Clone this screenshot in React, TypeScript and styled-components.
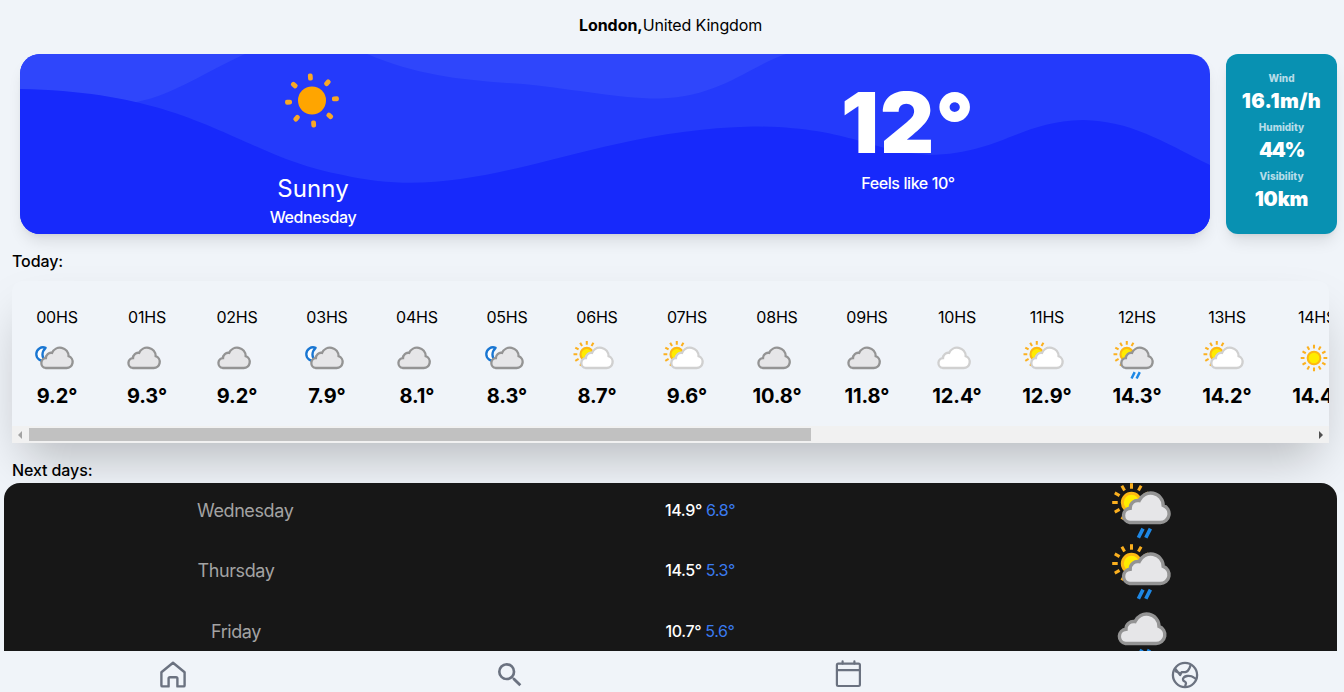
import React from "react";
import styled, { createGlobalStyle } from "styled-components";
import { MdSearch } from "react-icons/md";

const GlobalStyle = createGlobalStyle`
  *, *::before, *::after { box-sizing: border-box; }
  html, body { margin: 0; padding: 0; height: 692px; overflow: hidden; background: #f0f4f9; }
  body { font-family: Inter, Roboto, sans-serif; font-size: 16px; color: #000; }
`;

const Page = styled.div`
  display: flex;
  flex-direction: column;
  width: 1344px;
  height: 692px;
  overflow: hidden;
`;

/* ---------- header ---------- */

const Location = styled.header`
  display: flex;
  justify-content: center;
  align-items: center;
  flex: 0 0 54px;
  padding: 0 3px 5px 0;
  line-height: 24px;
`;

const City = styled.strong`
  font-weight: 700;
  letter-spacing: -0.05px;
`;

const Country = styled.span`
  letter-spacing: -0.15px;
`;

/* ---------- current weather ---------- */

const CurrentRow = styled.section`
  display: flex;
  gap: 16px;
  flex: 0 0 180px;
  padding: 0 7px 0 20px;
`;

const CurrentCard = styled.div`
  display: grid;
  grid-template: 100% / 1fr 1fr;
  flex: 0 0 1190px;
  border-radius: 20px;
  overflow: hidden;
  color: #fff;
  background: #243afb;
  box-shadow: 0 10px 15px -3px rgba(0, 0, 0, 0.1), 0 4px 6px -4px rgba(0, 0, 0, 0.1);
`;

const Waves = styled.svg`
  grid-area: 1 / 1 / 2 / 3;
  width: 1190px;
  height: 180px;
`;

const CurrentCell = styled.div<{ $column: number; $top: number }>`
  grid-area: 1 / ${(p) => p.$column};
  z-index: 1;
  display: flex;
  flex-direction: column;
  align-items: center;
  padding: ${(p) => p.$top}px 9px 0 0;
`;

const Condition = styled.div`
  margin-top: 43px;
  font-size: 24px;
  line-height: 32px;
  letter-spacing: 0.1px;
`;

const SmallLine = styled.div`
  font-weight: 500;
  line-height: 24px;
  letter-spacing: -0.4px;
`;

const BigTemp = styled.div`
  font-size: 84px;
  font-weight: 900;
  line-height: 96px;
  letter-spacing: 1px;
`;

const DetailCard = styled.aside`
  display: flex;
  flex-direction: column;
  align-items: center;
  flex: 1;
  padding-top: 16px;
  border-radius: 12px;
  background: #0891b2;
  box-shadow: 0 10px 15px -3px rgba(0, 0, 0, 0.1), 0 4px 6px -4px rgba(0, 0, 0, 0.1);
`;

const DetailLabel = styled.div`
  font-size: 10px;
  font-weight: 800;
  line-height: 17px;
  color: #b5dce8;
`;

const DetailValue = styled.div<{ $track: number }>`
  font-size: 20px;
  font-weight: 900;
  line-height: 28px;
  margin-bottom: 4px;
  color: #fff;
  letter-spacing: ${(p) => p.$track}px;
`;

/* ---------- hourly ---------- */

const SectionTitle = styled.h2<{ $height: number; $lift: number }>`
  display: flex;
  align-items: flex-end;
  flex: 0 0 ${(p) => p.$height}px;
  margin: 0;
  padding: 0 0 ${(p) => p.$lift}px 12px;
  font-size: 16px;
  line-height: 20px;
  font-weight: 500;
  letter-spacing: -0.1px;
`;

const HourlyCard = styled.section`
  display: flex;
  flex-direction: column;
  flex: 0 0 162px;
  width: 1317px;
  margin-left: 12px;
  overflow: hidden;
  border-radius: 10px 10px 0 0;
  background: #f0f4f9;
  box-shadow: 0 25px 50px -12px rgba(0, 0, 0, 0.25);
`;

const HourList = styled.div`
  display: flex;
  flex: 0 0 145px;
  overflow: hidden;
`;

const HourItem = styled.div`
  display: flex;
  flex-direction: column;
  align-items: center;
  flex: 0 0 90px;
  padding-top: 24px;
`;

const HourLabel = styled.div`
  line-height: 24px;
  letter-spacing: -0.2px;
`;

const HourTemp = styled.div`
  font-size: 20px;
  font-weight: 700;
  line-height: 28px;
  letter-spacing: -0.1px;
`;

const HourIcon = styled.div`
  display: flex;
  height: 44px;
  margin: 7px 6px 2px 0;
`;

const ScrollTrack = styled.div`
  display: flex;
  align-items: center;
  flex: 0 0 17px;
  padding: 0 6px;
  background: #f1f1f1;
`;

const ScrollThumb = styled.div`
  width: 782px;
  height: 13px;
  margin: 0 auto 0 7px;
  background: #c1c1c1;
`;

const ScrollArrow = styled.div<{ $dir: "left" | "right" }>`
  border: 4px solid transparent;
  border-left-width: ${(p) => (p.$dir === "left" ? 0 : 4)}px;
  border-right-width: ${(p) => (p.$dir === "left" ? 4 : 0)}px;
  border-${(p) => (p.$dir === "left" ? "right" : "left")}-color: ${(p) =>
    p.$dir === "left" ? "#a3a3a3" : "#505050"};
`;

/* ---------- next days ---------- */

const DaysCard = styled.section`
  flex: 0 0 168px;
  width: 1333px;
  margin-left: 4px;
  overflow: hidden;
  border-radius: 16px 16px 0 0;
  background: #171717;
`;

const DayRow = styled.div`
  display: grid;
  grid-template-columns: 78px 80px 64px;
  column-gap: 385px;
  align-items: center;
  height: 60.5px;
  padding: 0 0 7px 193px;
`;

const DayName = styled.div`
  display: flex;
  justify-content: safe center;
  padding-top: 1px;
  font-size: 18px;
  color: #a3a3a3;
  letter-spacing: -0.4px;
`;

const DayTemps = styled.div`
  display: flex;
  justify-content: center;
  gap: 4px;
  color: #fff;
  font-weight: 500;
  letter-spacing: -0.35px;
`;

const LowTemp = styled.span`
  color: #3b7bf0;
  font-weight: 400;
`;

const DayIcon = styled.div`
  display: flex;
  align-self: start;
  height: 53px;
  margin: -7px 0 0 -15px;
`;

/* ---------- navigation ---------- */

const Nav = styled.nav`
  display: grid;
  grid-template-columns: repeat(4, 337.5px);
  flex: 0 0 41px;
  margin-left: 4px;
`;

const NavItem = styled.a`
  display: flex;
  justify-content: center;
  height: 40px;
  padding-top: 8px;
  color: #6b7280;
`;

/* ---------- icons ---------- */

const WeatherSvg = styled.svg`
  overflow: visible;
  flex: none;
`;

type Kind = "night" | "overcast" | "cloudy" | "partly" | "sunRain" | "rain" | "sun";

const CLOUD =
  "M19.7 46.5H50.2A8.8 8.8 0 0 0 53.2 29.4A12.5 12.5 0 0 0 29.2 24.6A7.5 7.5 0 0 0 20.2 32.2A7.2 7.2 0 0 0 19.7 46.5Z";

function SunShape({ cx, cy }: { cx: number; cy: number }) {
  return (
    <g transform={`translate(${cx} ${cy})`}>
      {Array.from({ length: 12 }, (_, i) => (
        <path key={i} d="M0-19.3V-13.8" stroke="#fbb01f" strokeWidth="3" transform={`rotate(${i * 30})`} />
      ))}
      <circle r="9.2" fill="#ffec00" stroke="#fdb813" strokeWidth="3" />
    </g>
  );
}

function WeatherIcon({ kind, size }: { kind: Kind; size: number }) {
  const behind = kind === "partly" || kind === "sunRain" || kind === "night";
  const white = kind === "partly" || kind === "cloudy";
  const rain = kind === "sunRain" || kind === "rain";
  return (
    <WeatherSvg width={size} height={size} viewBox="0 0 64 64" fill="none">
      {kind === "sun" && <SunShape cx={32} cy={32} />}
      {(kind === "partly" || kind === "sunRain") && <SunShape cx={21.5} cy={26.5} />}
      {kind === "night" && (
        <path
          d="M19.8 17.2A9.8 9.8 0 1 0 19.3 35.5C13.8 31 13.8 23 19.8 17.2Z"
          fill="#fff"
          stroke="#1976d2"
          strokeWidth="3.4"
          strokeLinejoin="round"
        />
      )}
      {kind !== "sun" && (
        <path
          d={CLOUD}
          transform={behind ? undefined : "translate(-4.2 0)"}
          fill={white ? "#fff" : "#e6e6e8"}
          stroke={white ? "#d0d0d0" : "#949494"}
          strokeWidth="3.4"
        />
      )}
      {rain && (
        <path
          d="M33 52.6L28.4 61.8M40.4 52.6L35.8 61.8"
          transform={behind ? undefined : "translate(-1 0)"}
          stroke="#1e88e5"
          strokeWidth="3.6"
        />
      )}
    </WeatherSvg>
  );
}

function BigSun() {
  return (
    <WeatherSvg width="62" height="60" viewBox="-30 -30.5 62 60">
      {Array.from({ length: 8 }, (_, i) => (
        <rect
          key={i}
          x="-2.4"
          y="-27"
          width="4.8"
          height="7"
          rx="2"
          fill="#f9a825"
          transform={`rotate(${i * 45 - 4})`}
        />
      ))}
      <circle r="14" fill="#ffa500" />
    </WeatherSvg>
  );
}

function HomeIcon() {
  return (
    <svg width="32" height="32" viewBox="0 0 32 32" fill="none" stroke="currentColor" strokeWidth="2.4" strokeLinejoin="round">
      <path d="M4.4 13.2L16 3.8L27.6 13.2V26.4A1 1 0 0 1 26.6 27.4H20.4V19.6A1.4 1.4 0 0 0 19 18.2H13A1.4 1.4 0 0 0 11.6 19.6V27.4H5.4A1 1 0 0 1 4.4 26.4Z" />
    </svg>
  );
}

function CalendarIcon() {
  return (
    <svg width="32" height="32" viewBox="0 0 32 32" fill="none" stroke="currentColor" strokeWidth="2.2" strokeLinecap="round">
      <rect x="4.9" y="4.6" width="23" height="22.4" rx="1.4" />
      <path d="M5 11.2H28M10.6 2.4V4.6M22.4 2.4V4.6" />
    </svg>
  );
}

function GlobeIcon() {
  return (
    <svg width="32" height="32" viewBox="0 0 32 32" fill="none" stroke="currentColor" strokeWidth="2.3" strokeLinejoin="round">
      <circle cx="16" cy="16" r="12.1" />
      <path d="M21.8 5.8L20.4 9.2C19.4 11.4 18.6 12.8 16.6 13L12.6 13.2L11.2 16L6 9.6M5.8 12L11.2 14.2" />
      <path d="M27.6 20.4L24.6 18.4C23 17 20.4 16.8 18 17C15.4 17.4 13.6 19 14 20.8C14.4 22.8 17 22.4 17 24.2L16 28" />
    </svg>
  );
}

/* ---------- data ---------- */

const hours: [string, Kind, string][] = [
  ["00HS", "night", "9.2°"],
  ["01HS", "overcast", "9.3°"],
  ["02HS", "overcast", "9.2°"],
  ["03HS", "night", "7.9°"],
  ["04HS", "overcast", "8.1°"],
  ["05HS", "night", "8.3°"],
  ["06HS", "partly", "8.7°"],
  ["07HS", "partly", "9.6°"],
  ["08HS", "overcast", "10.8°"],
  ["09HS", "overcast", "11.8°"],
  ["10HS", "cloudy", "12.4°"],
  ["11HS", "partly", "12.9°"],
  ["12HS", "sunRain", "14.3°"],
  ["13HS", "partly", "14.2°"],
  ["14HS", "sun", "14.4°"],
];

const days: [string, string, string, Kind][] = [
  ["Wednesday", "14.9°", "6.8°", "sunRain"],
  ["Thursday", "14.5°", "5.3°", "sunRain"],
  ["Friday", "10.7°", "5.6°", "rain"],
];

const details: [string, string, number][] = [
  ["Wind", "16.1m/h", 0.4],
  ["Humidity", "44%", -1.4],
  ["Visibility", "10km", -0.2],
];

export default function App() {
  return (
    <Page>
      <GlobalStyle />
      <Location>
        <City>London,</City>
        <Country>United Kingdom</Country>
      </Location>

      <CurrentRow>
        <CurrentCard>
          <Waves viewBox="0 0 1190 180">
            <path d="M0 0H225C185 18 155 40 117 48L0 60Z" fill="#2f46fb" />
            <path d="M347 0C400 22 440 26 503 30C540 33 600 45 640 44.5C700 43 730 12 766 0Z" fill="#2f46fb" />
            <path
              d="M0 35C180 38 220 103 323 121C460 153 560 76 733 72.5C830 73 850 98 909 101C980 100 1000 67 1063 66C1110 67 1140 86 1190 111V180H0Z"
              fill="#1729fb"
            />
          </Waves>
          <CurrentCell $column={1} $top={16}>
            <BigSun />
            <Condition>Sunny</Condition>
            <SmallLine>Wednesday</SmallLine>
          </CurrentCell>
          <CurrentCell $column={2} $top={21}>
            <BigTemp>12°</BigTemp>
            <SmallLine>Feels like 10°</SmallLine>
          </CurrentCell>
        </CurrentCard>
        <DetailCard>
          {details.map(([label, value, track]) => (
            <React.Fragment key={label}>
              <DetailLabel>{label}</DetailLabel>
              <DetailValue $track={track}>{value}</DetailValue>
            </React.Fragment>
          ))}
        </DetailCard>
      </CurrentRow>

      <SectionTitle $height={47} $lift={10}>Today:</SectionTitle>
      <HourlyCard>
        <HourList>
          {hours.map(([label, kind, temp]) => (
            <HourItem key={label}>
              <HourLabel>{label}</HourLabel>
              <HourIcon>
                <WeatherIcon kind={kind} size={44} />
              </HourIcon>
              <HourTemp>{temp}</HourTemp>
            </HourItem>
          ))}
        </HourList>
        <ScrollTrack>
          <ScrollArrow $dir="left" />
          <ScrollThumb />
          <ScrollArrow $dir="right" />
        </ScrollTrack>
      </HourlyCard>

      <SectionTitle $height={40} $lift={3}>Next days:</SectionTitle>
      <DaysCard>
        {days.map(([name, high, low, kind]) => (
          <DayRow key={name}>
            <DayName>{name}</DayName>
            <DayTemps>
              {high}
              <LowTemp>{low}</LowTemp>
            </DayTemps>
            <DayIcon>
              <WeatherIcon kind={kind} size={64} />
            </DayIcon>
          </DayRow>
        ))}
      </DaysCard>

      <Nav>
        <NavItem><HomeIcon /></NavItem>
        <NavItem><MdSearch size={32} /></NavItem>
        <NavItem><CalendarIcon /></NavItem>
        <NavItem><GlobeIcon /></NavItem>
      </Nav>
    </Page>
  );
}
